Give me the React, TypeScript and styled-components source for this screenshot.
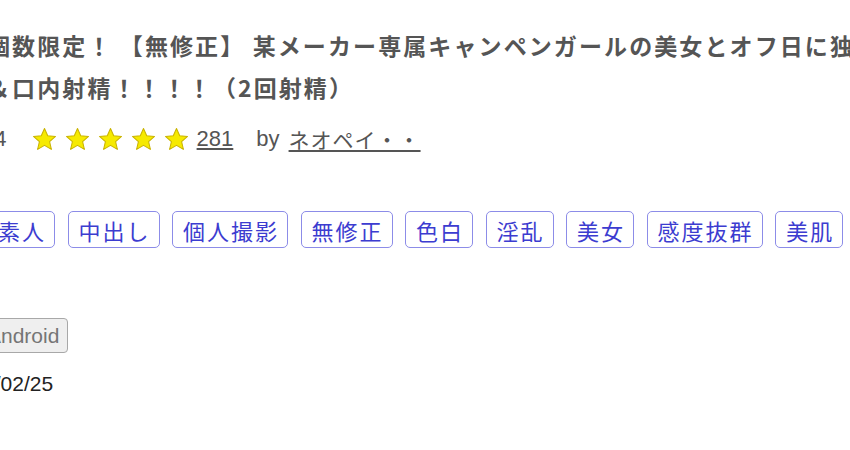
import React from "react";
import styled, { createGlobalStyle } from "styled-components";

const Global = createGlobalStyle`
  html, body {
    margin: 0;
    padding: 0;
    background: #ffffff;
    overflow: hidden;
  }
  body {
    font-family: "Liberation Sans", "Noto Sans CJK JP", sans-serif;
  }
`;

const Page = styled.div`
  margin-left: -13px;
  width: 1100px;
  display: flex;
  flex-direction: column;
  align-items: flex-start;
`;

const Title = styled.h1`
  margin: 24px 0 0 0;
  width: 1005px;
  font-family: "Noto Sans CJK JP", sans-serif;
  font-size: 23px;
  font-weight: 700;
  line-height: 42px;
  letter-spacing: 2.1px;
  color: #555555;
`;

const RatingRow = styled.div`
  display: flex;
  align-items: center;
  height: 40px;
  margin-top: 11px;
  font-size: 22px;
  color: #555555;
`;

const RatingValue = styled.span`
  margin-left: -11px;
  margin-right: 25px;
  font-family: "Liberation Sans", sans-serif;
`;

const Stars = styled.span`
  display: flex;
  gap: 8px;
  margin-right: 8px;
`;

const Count = styled.a`
  color: #555555;
  text-decoration: underline;
  font-family: "Liberation Sans", sans-serif;
  margin-right: 23px;
`;

const By = styled.span`
  margin-right: 9px;
  font-family: "Liberation Sans", sans-serif;
`;

const Author = styled.a`
  color: #555555;
  text-decoration: underline;
  font-family: "Noto Sans CJK JP", sans-serif;
  font-size: 21px;
  letter-spacing: 1px;
`;

const Tags = styled.ul`
  display: flex;
  gap: 12.5px;
  list-style: none;
  margin: 52px 0 0 0;
  padding: 0;
`;

const Tag = styled.li`
  display: flex;
  align-items: center;
  height: 37px;
  box-sizing: border-box;
  padding: 0 8px 0 10px;
  border: 1px solid #8c8ce8;
  border-radius: 5px;
  font-family: "Noto Sans CJK JP", sans-serif;
  font-size: 22px;
  letter-spacing: 2px;
  color: #3c3cd0;
`;

const DeviceButton = styled.button`
  margin: 70px 0 0 -9px;
  height: 35px;
  padding: 0 8px;
  border: 1px solid #a8a8a8;
  border-radius: 4px;
  background: #efefef;
  color: #757575;
  font-family: "Liberation Sans", sans-serif;
  font-size: 21px;
`;

const DateText = styled.div`
  margin: 19px 0 0 -39px;
  font-family: "Liberation Sans", sans-serif;
  font-size: 21px;
  color: #222222;
`;

const Star = () => (
  <svg width="25" height="25" viewBox="0 0 24 24">
    <polygon
      points="12,1.5 15.1,8.4 22.6,9.1 16.9,14.1 18.6,21.5 12,17.6 5.4,21.5 7.1,14.1 1.4,9.1 8.9,8.4"
      fill="#f6ea00"
      stroke="#c9b300"
      strokeWidth="1"
      strokeLinejoin="round"
    />
  </svg>
);

const tags = ["素人", "中出し", "個人撮影", "無修正", "色白", "淫乱", "美女", "感度抜群", "美肌", "巨乳"];

export default function App() {
  return (
    <>
      <Global />
      <Page>
        <Title>
          個数限定！ 【無修正】 某メーカー専属キャンペンガールの美女とオフ日に独占ハメ撮り＆口内射精！！！！（2回射精）
        </Title>
        <RatingRow>
          <RatingValue>4.4</RatingValue>
          <Stars>
            {[0, 1, 2, 3, 4].map((i) => (
              <Star key={i} />
            ))}
          </Stars>
          <Count href="#">281</Count>
          <By>by</By>
          <Author href="#">ネオペイ・・</Author>
        </RatingRow>
        <Tags>
          {tags.map((t) => (
            <Tag key={t}>{t}</Tag>
          ))}
        </Tags>
        <DeviceButton>Android</DeviceButton>
        <DateText>2024/02/25</DateText>
      </Page>
    </>
  );
}
